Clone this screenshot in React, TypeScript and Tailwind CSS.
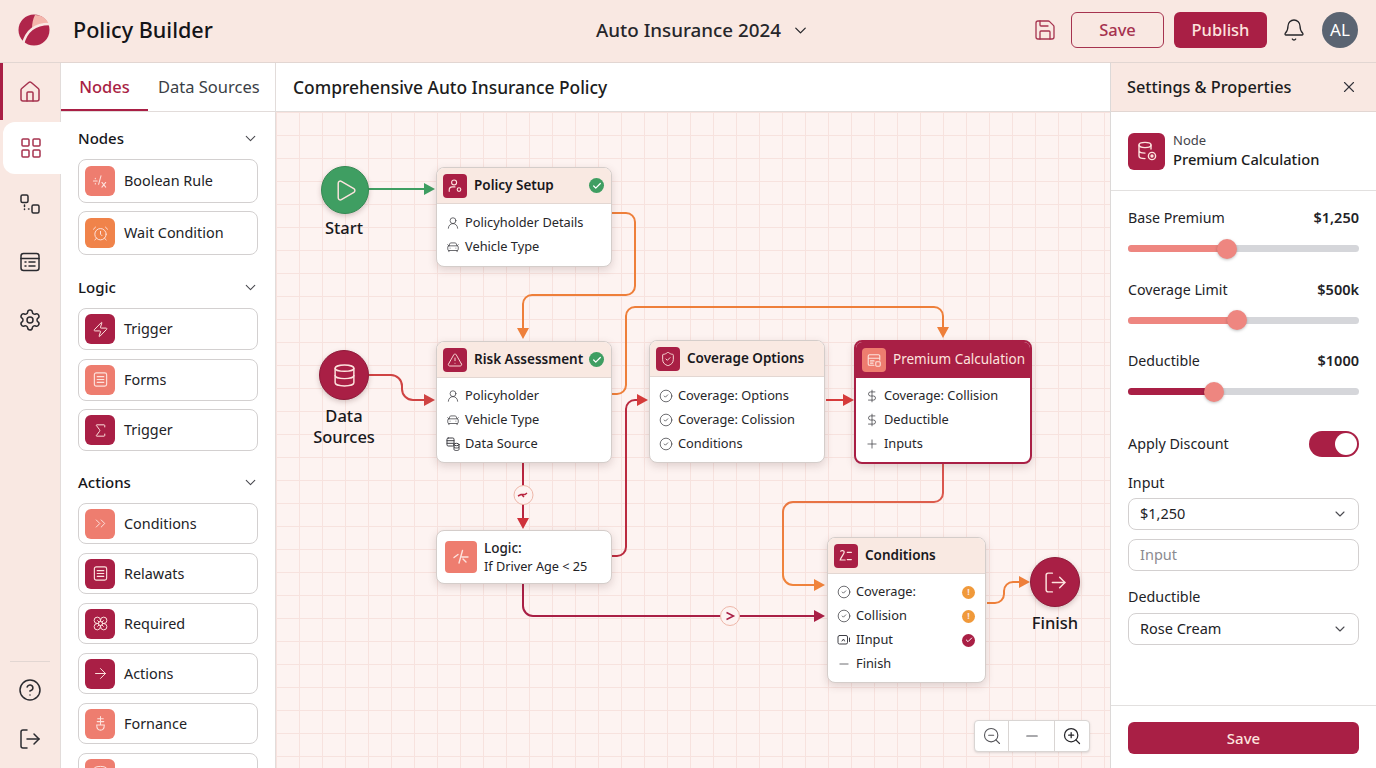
import React from "react";
import {
  House, LayoutGrid, Settings, CircleHelp, LogOut, Save, Bell, ChevronDown, X, AlarmClock, Zap,
  Sigma, ChevronsRight, Flower, ArrowRight, Play, Database, UserRound, CarFront,
  TriangleAlert, ShieldCheck, CircleCheck, Check, DollarSign, Plus, Minus, ZoomIn, ZoomOut,
} from "lucide-react";

type IconT = React.ComponentType<{ size?: number; strokeWidth?: number; className?: string }>;

const FnIcon: IconT = ({ size = 18, className }) => (
  <svg width={size} height={size} viewBox="0 0 18 18" fill="none" stroke="currentColor" strokeWidth={1.1} strokeLinecap="round" className={className}>
    <path d="M1.5 8.5h4M3.5 5.5v.6M3.5 11v.6M9.5 3 7 12M10.5 10l4 5M14.5 10l-4 5" />
  </svg>
);
const LogicIcon: IconT = ({ size = 18, className }) => (
  <svg width={size} height={size} viewBox="0 0 18 18" fill="none" stroke="currentColor" strokeWidth={1.4} strokeLinecap="round" className={className}>
    <path d="M2 9.5 6 6.5M10.5 2.5 7 15M10 9h6M11 11l3 3" />
  </svg>
);
const CondIcon: IconT = ({ size = 18, className }) => (
  <svg width={size} height={size} viewBox="0 0 18 18" fill="none" stroke="currentColor" strokeWidth={1.4} strokeLinecap="round" className={className}>
    <path d="M3 3.5c1-1 4-1 4 1 0 2-4 6-4.500 9H8M10.5 5H15M10.5 13H15" />
  </svg>
);
const PotIcon: IconT = ({ size = 18, className }) => (
  <svg width={size} height={size} viewBox="0 0 18 18" fill="none" stroke="currentColor" strokeWidth={1.1} strokeLinecap="round" className={className}>
    <path d="M9 1.500v9M6 4h6M5.500 7h7M5 10.500h8c0 3-1.500 5.500-4 5.500s-4-2.500-4-5.500Z" />
  </svg>
);
const DocLines: IconT = ({ size = 18, className }) => (
  <svg width={size} height={size} viewBox="0 0 18 18" fill="none" stroke="currentColor" strokeWidth={1.2} strokeLinecap="round" className={className}>
    <rect x="2.500" y="2" width="13" height="14" rx="2" />
    <path d="M5.500 6h7M5.500 9h7M5.500 12h7" />
  </svg>
);
const UserKey: IconT = ({ size = 18, className }) => (
  <svg width={size} height={size} viewBox="0 0 18 18" fill="none" stroke="currentColor" strokeWidth={1.3} strokeLinecap="round" className={className}>
    <circle cx="8" cy="5" r="2.800" />
    <path d="M2.500 15v-1.500c0-2 1.500-3.500 3.500-3.500h3" />
    <circle cx="13.500" cy="13" r="2" />
  </svg>
);
const CalcIcon: IconT = ({ size = 18, className }) => (
  <svg width={size} height={size} viewBox="0 0 18 18" fill="none" stroke="currentColor" strokeWidth={1.2} strokeLinecap="round" className={className}>
    <path d="M9 15H4a1.500 1.500 0 0 1-1.500-1.500v-9A1.500 1.500 0 0 1 4 3h10a1.500 1.500 0 0 1 1.500 1.500V9M2.500 7h13M5 10h4M5 12.500h3" />
    <rect x="11" y="11" width="5" height="5" rx="1" />
  </svg>
);
const DbGear: IconT = ({ size = 22, className }) => (
  <svg width={size} height={size} viewBox="0 0 22 22" fill="none" stroke="currentColor" strokeWidth={1.4} strokeLinecap="round" className={className}>
    <ellipse cx="9" cy="5" rx="6" ry="2.600" />
    <path d="M3 5v11c0 1.500 2.500 2.600 6 2.600M15 5v4M3 10.500c0 1.500 2.500 2.600 6 2.600" />
    <circle cx="16" cy="16" r="3.600" />
    <circle cx="16" cy="16" r="1" fill="currentColor" />
  </svg>
);
const FlowRail: IconT = ({ size = 22, className }) => (
  <svg width={size} height={size} viewBox="0 0 22 22" fill="none" stroke="currentColor" strokeWidth={1.5} strokeLinecap="round" strokeLinejoin="round" className={className}>
    <rect x="2" y="2" width="7" height="7.500" rx="1.500" />
    <rect x="13" y="12" width="7" height="8" rx="1.500" />
    <path d="M5.500 12v1.500M5.500 16v.5M9.500 16h.5" />
  </svg>
);
const TableRail: IconT = ({ size = 22, className }) => (
  <svg width={size} height={size} viewBox="0 0 22 22" fill="none" stroke="currentColor" strokeWidth={1.5} strokeLinecap="round" strokeLinejoin="round" className={className}>
    <rect x="2" y="2.500" width="18" height="17" rx="2.500" />
    <path d="M2 7.500h18M6 11h1M10 11h6M6 15h1M10 15h6" />
  </svg>
);
const VideoBox: IconT = ({ size = 14, className }) => (
  <svg width={size} height={size} viewBox="0 0 14 14" fill="none" stroke="currentColor" strokeWidth={1} strokeLinecap="round" className={className}>
    <rect x="1" y="2.500" width="9.500" height="8.500" rx="1.500" />
    <path d="M5 8l1.500-2 1 2M12.500 5v3.500" />
  </svg>
);
const DbStack: IconT = ({ size = 14, className }) => (
  <svg width={size} height={size} viewBox="0 0 14 14" fill="none" stroke="currentColor" strokeWidth={1} strokeLinecap="round" className={className}>
    <rect x="1" y="1" width="7" height="8" rx="1.200" />
    <path d="M1 3.700h7M1 6.300h7" />
    <ellipse cx="10.500" cy="7.500" rx="2.500" ry="1.200" />
    <path d="M8 7.500v5c0 .6 1.100 1 2.500 1s2.500-.4 2.500-1v-5M8 10c0 .6 1.100 1 2.500 1s2.500-.4 2.500-1" />
  </svg>
);

const SideItem = ({ icon: Icon, label, tone, h }: { icon: IconT; label: string; tone: string; h: string }) => (
  <div className={`flex ${h} shrink-0 items-center gap-[9px] rounded-lg border border-[#d3d0d0] bg-white pl-[6px]`}>
    <div className={`flex h-[30px] w-[30px] items-center justify-center rounded-md text-[#fde3de] ${tone}`}>
      <Icon size={17} strokeWidth={1.4} />
    </div>
    <span className="text-[14.4px] text-[#222226]">{label}</span>
  </div>
);

const crimson = "bg-[#a91f45]";
const coral = "bg-[#ee7d6f]";

const SectionHead = ({ title }: { title: string }) => (
  <div className="flex h-5 items-center justify-between">
    <span className="text-[15px] font-medium text-[#16161a]">{title}</span>
    <ChevronDown size={17} strokeWidth={1.5} className="mr-[-1px] text-[#4a4a50]" />
  </div>
);

const RailBtn = ({ icon: Icon, cls, size = 24 }: { icon: IconT; cls?: string; size?: number }) => (
  <div className={`flex items-center justify-center ${cls ?? ""}`}>
    <Icon size={size} strokeWidth={1.5} />
  </div>
);

type Row = { icon: IconT; text: string; badge?: "warn" | "ok" };

const Good = () => (
  <span className="flex h-[15px] w-[15px] items-center justify-center rounded-full bg-[#3f9e62] text-white">
    <Check size={10} strokeWidth={3} />
  </span>
);

const NodeCard = ({
  x, y, w, h, title, icon: Icon, rows, ok, active, pt = "pt-[7px]",
}: {
  x: string; y: string; w: string; h: string; title: string; icon: IconT; rows: Row[]; ok?: boolean; active?: boolean; pt?: string;
}) => (
  <div className={`absolute ${x} ${y} ${w} ${h} overflow-hidden rounded-lg border bg-white shadow-[0_3px_8px_rgba(90,50,50,0.18)] ${active ? "border-2 border-[#a91f45]" : "border-[#d4cdca]"}`}>
    <div className={`flex h-[36px] items-center border-b pl-[6px] pr-[7px] ${active ? "border-[#a91f45] bg-[#a91f45] text-[#fde3de]" : "border-[#e3d7d2] bg-[#f9e9e2] text-[#18181c]"}`}>
      <div className={`mr-[7px] flex h-[24px] w-[24px] shrink-0 items-center justify-center rounded ${active ? "bg-[#ee7d6f]" : "bg-[#a91f45]"} text-[#fde3de]`}>
        <Icon size={16} strokeWidth={1.4} />
      </div>
      <span className={`flex-1 whitespace-nowrap pb-[1px] text-[13.5px] ${active ? "font-normal" : "font-semibold"}`}>{title}</span>
      {ok && <Good />}
    </div>
    <div className={`flex flex-col ${pt} pl-[9px] pr-[10px]`}>
      {rows.map((r, i) => (
        <div key={i} className="flex h-[24px] items-center text-[12.8px] text-[#26262a]">
          <span className="flex w-[19px] shrink-0 justify-start text-[#3f3f45]">
            <r.icon size={14} strokeWidth={1.3} />
          </span>
          <span className="flex-1 whitespace-nowrap">{r.text}</span>
          {r.badge === "warn" && (
            <span className="flex h-[13px] w-[13px] items-center justify-center rounded-full bg-[#f0993a] text-[9px] font-bold text-[#fde3de]">!</span>
          )}
          {r.badge === "ok" && (
            <span className="flex h-[13px] w-[13px] items-center justify-center rounded-full bg-[#a91f45] text-white">
              <Check size={8} strokeWidth={3} />
            </span>
          )}
        </div>
      ))}
    </div>
  </div>
);

const SliderRow = ({ label, value, pos, fill }: { label: string; value: string; pos: string; fill: string }) => (
  <div className="h-[71.5px]">
    <div className="flex h-5 items-center justify-between text-[14.2px] text-[#222226]">
      <span>{label}</span>
      <span className="text-[14.5px] font-semibold">{value}</span>
    </div>
    <div className="relative mt-[17px] h-[7px] rounded-full bg-[#d5d6da]">
      <div className={`h-full rounded-full ${fill} ${pos}`} />
      <div className={`absolute top-[-6.5px] h-[20px] w-[20px] rounded-full bg-[#ee8680] shadow-[0_1px_3px_rgba(0,0,0,0.25)] ${pos === "w-[99px]" ? "left-[89px]" : pos === "w-[109px]" ? "left-[99px]" : "left-[76px]"}`} />
    </div>
  </div>
);

const SelectBox = ({ text, cls }: { text: string; cls: string }) => (
  <div className={`flex h-[32px] items-center justify-between rounded-lg border border-[#d3d0d0] pl-[11px] pr-[10px] text-[14.5px] text-[#222226] ${cls}`}>
    <span>{text}</span>
    <ChevronDown size={16} strokeWidth={1.6} className="text-[#4a4a50]" />
  </div>
);

const Head = ({ x, y, fill, dir = "right" }: { x: number; y: number; fill: string; dir?: "right" | "down" }) =>
  dir === "right" ? (
    <path d={`M${x} ${y}l-11 -6v12z`} fill={fill} />
  ) : (
    <path d={`M${x} ${y}l-6 -11h12z`} fill={fill} />
  );

const Edges = () => (
  <svg className="absolute left-0 top-0" width={834} height={656} viewBox="276 112 834 656" fill="none">
    <defs>
      <linearGradient id="pc" gradientUnits="userSpaceOnUse" x1="943" y1="470" x2="800" y2="590">
        <stop offset="0" stopColor="#d9544f" />
        <stop offset="1" stopColor="#f0843c" />
      </linearGradient>
    </defs>
    <g strokeWidth={2}>
      <path d="M368 189H426" stroke="#3f9e62" />
      <Head x={435} y={189} fill="#3f9e62" />
      <path d="M612 213h14a9 9 0 0 1 9 9v64a9 9 0 0 1-9 9H532a9 9 0 0 0-9 9v26" stroke="#ee7f3a" />
      <Head x={523} y={339} fill="#ee7f3a" dir="down" />
      <path d="M369 375h22a11 11 0 0 1 11 11v3a11 11 0 0 0 11 11h14" stroke="#cf4343" />
      <Head x={435} y={400} fill="#cf4343" />
      <path d="M612 394h5a9 9 0 0 0 9-9v-69a9 9 0 0 1 9-9h299a9 9 0 0 1 9 9v14" stroke="#ee7f3a" />
      <Head x={943} y={338} fill="#ee7f3a" dir="down" />
      <path d="M612 556h5a9 9 0 0 0 9-9V409a9 9 0 0 1 9-9h6" stroke="#bb2b3f" />
      <Head x={648} y={400} fill="#d63b3b" />
      <path d="M826 400h18" stroke="#d63b3b" />
      <Head x={854} y={400} fill="#d63b3b" />
      <path d="M523 463v57" stroke="#b8243f" />
      <Head x={523} y={529} fill="#cf3039" dir="down" />
      <path d="M523 584v22a10 10 0 0 0 10 10h284" stroke="#a91f45" />
      <Head x={825} y={616} fill="#a91f45" />
      <path d="M943 464v29a9 9 0 0 1-9 9H793a10 10 0 0 0-10 10v63a10 10 0 0 0 10 10h24" stroke="url(#pc)" />
      <Head x={825} y={585} fill="#f0843c" />
      <path d="M987 603h8a9 9 0 0 0 9-9v-3a9 9 0 0 1 9-9h8" stroke="#ee7f3a" />
      <Head x={1030} y={582} fill="#ee7f3a" />
    </g>
    <circle cx="523.500" cy="495" r="9.500" fill="#fdf3f1" stroke="#eeb7a9" />
    <path d="M518 496l3-1.500h4l2-1.500M522 495l2 2" stroke="#b8243f" strokeWidth={1.5} />
    <circle cx="730" cy="616" r="9.500" fill="#fdf3f1" stroke="#eeb7a9" />
    <path d="M726.500 612.500l7 3.500-7 3.500" stroke="#a91f45" strokeWidth={1.5} />
  </svg>
);

const Circle = ({ x, y, size, bg, icon: Icon, label, labelCls }: { x: string; y: string; size: string; bg: string; icon: IconT; label: string; labelCls: string }) => (
  <>
    <div className={`absolute ${x} ${y} ${size} flex items-center justify-center rounded-full border ${bg} text-[#fde3de] shadow-[0_2px_5px_rgba(90,50,50,0.25)]`}>
      <Icon size={25} strokeWidth={1.4} />
    </div>
    <div className={`absolute text-center text-[16.5px] font-medium leading-[21px] text-[#18181c] ${labelCls}`}>{label}</div>
  </>
);

export default function App() {
  return (
    <div className="flex h-[768px] w-[1376px] flex-col overflow-hidden bg-white font-['Noto_Sans',sans-serif] text-[#222226]">
      {/* top bar */}
      <header className="grid h-[63px] shrink-0 grid-cols-[596px_auto_1fr] items-center border-b border-[#e2d6d2] bg-[#f9e8e2]">
        <div className="flex items-center pb-[2px] pl-[18px]">
          <svg width="32" height="32" viewBox="0 0 32 32">
            <circle cx="16" cy="16" r="15.500" fill="#b0254b" />
            <path d="M17 1c6 0 11 3 14 9-6-1-12 0-17 5 0-6 1-10 3-14Z" fill="#f4b6ac" />
            <path d="M5 30C8 18 16 10 31 10" stroke="#f9e8e3" strokeWidth="2.400" fill="none" />
          </svg>
          <span className="ml-[23px] text-[21.6px] font-medium text-[#141418]">Policy Builder</span>
        </div>
        <div className="flex items-center gap-[10px] pb-[2px] text-[18.8px] font-medium text-[#26262a]">
          <span>Auto Insurance 2024</span>
          <ChevronDown size={19} strokeWidth={1.6} />
        </div>
        <div className="flex items-center justify-end pb-[2px] pr-[18px]">
          <Save size={24} strokeWidth={1.3} className="mr-[14px] text-[#a6334f]" />
          <div className="mr-[10px] flex h-[36px] w-[93px] items-center justify-center rounded-md border border-[#a6334f] text-[16.5px] font-medium text-[#a6334f]">Save</div>
          <div className="mr-[15px] flex h-[36px] w-[93px] items-center justify-center rounded-md bg-[#a91f45] text-[16.5px] font-medium text-[#fde3de]">Publish</div>
          <Bell size={24} strokeWidth={1.3} className="mr-[16px] text-[#26262a]" />
          <div className="flex h-[36px] w-[36px] items-center justify-center rounded-full bg-[#5b6472] text-[17px] text-white">AL</div>
        </div>
      </header>

      <div className="flex min-h-0 flex-1">
        {/* rail */}
        <nav className="relative flex w-[61px] shrink-0 flex-col items-stretch border-r border-[#e2dcda] bg-[#f9e8e2]">
          <div className="h-[57px] border-l-[3px] border-[#a91f45]">
            <RailBtn icon={House} cls="h-full text-[#a6334f] pr-[4px]" />
          </div>
          <div className="ml-[3px] mr-[-1px] mt-[2px] flex h-[52px] items-center justify-center rounded-l-xl bg-white pr-[3px] text-[#a6334f]">
            <LayoutGrid size={24} strokeWidth={1.5} />
          </div>
          <RailBtn icon={FlowRail} size={22} cls="mt-[18px] h-[24px] text-[#2b2b30]" />
          <RailBtn icon={TableRail} size={22} cls="mt-[34px] h-[24px] text-[#2b2b30]" />
          <RailBtn icon={Settings} cls="mt-[34px] h-[24px] text-[#2b2b30]" />
          <div className="mx-[10px] mt-auto h-px bg-[#e2d6d2]" />
          <RailBtn icon={CircleHelp} cls="mt-[16px] h-[24px] text-[#2b2b30]" />
          <RailBtn icon={LogOut} cls="mb-[17px] mt-[25px] h-[24px] text-[#2b2b30]" />
        </nav>

        {/* node library */}
        <aside className="flex w-[215px] shrink-0 flex-col overflow-hidden border-r border-[#e2dcda] bg-white">
          <div className="flex h-[49px] shrink-0 items-stretch border-b border-[#e2dcda] text-[16.5px]">
            <div className="flex w-[87px] items-center justify-center border-b-2 border-[#a91f45] pt-[2px] font-medium text-[#a91f45]">Nodes</div>
            <div className="ml-[10px] flex items-center pt-[1px] text-[#3b3f46]">Data Sources</div>
          </div>
          <div className="flex flex-col px-[17px] pt-[16px]">
            <SectionHead title="Nodes" />
            <div className="mt-[11px] flex flex-col gap-[8px]">
              <SideItem icon={FnIcon} label="Boolean Rule" tone={coral} h="h-[44px]" />
              <SideItem icon={AlarmClock} label="Wait Condition" tone="bg-[#f0834a]" h="h-[44px]" />
            </div>
            <div className="mt-[22px]"><SectionHead title="Logic" /></div>
            <div className="mt-[11px] flex flex-col gap-[8.5px]">
              <SideItem icon={Zap} label="Trigger" tone={crimson} h="h-[42px]" />
              <SideItem icon={DocLines} label="Forms" tone={coral} h="h-[42px]" />
              <SideItem icon={Sigma} label="Trigger" tone={crimson} h="h-[42px]" />
            </div>
            <div className="mt-[21px]"><SectionHead title="Actions" /></div>
            <div className="mt-[11px] flex flex-col gap-[9px]">
              <SideItem icon={ChevronsRight} label="Conditions" tone={coral} h="h-[41px]" />
              <SideItem icon={DocLines} label="Relawats" tone={crimson} h="h-[41px]" />
              <SideItem icon={Flower} label="Required" tone={crimson} h="h-[41px]" />
              <SideItem icon={ArrowRight} label="Actions" tone={crimson} h="h-[41px]" />
              <SideItem icon={PotIcon} label="Fornance" tone={coral} h="h-[41px]" />
              <SideItem icon={Database} label="Submitter" tone={coral} h="h-[41px]" />
            </div>
          </div>
        </aside>

        {/* canvas column */}
        <main className="flex min-w-0 flex-1 flex-col">
          <div className="flex h-[49px] shrink-0 items-center border-b border-[#e2dcda] bg-white pl-[17px] text-[17.4px] font-medium text-[#1c1c20]">
            Comprehensive Auto Insurance Policy
          </div>
          <div className="relative flex-1 overflow-hidden bg-[#fdf3f1] bg-[linear-gradient(#f7e2de_1px,transparent_1px),linear-gradient(90deg,#f7e2de_1px,transparent_1px)] bg-[size:23px_23px]">
            <Edges />
            <Circle x="left-[45px]" y="top-[54px]" size="h-[48px] w-[48px]" bg="bg-[#3f9e62] border-[#358a54]" icon={Play} label="Start" labelCls="left-[33px] top-[105px] w-[70px]" />
            <Circle x="left-[43px]" y="top-[238px]" size="h-[50px] w-[50px]" bg="bg-[#a91f45] border-[#8f1a3a]" icon={Database} label={"Data Sources"} labelCls="left-[33px] top-[293px] w-[70px]" />
            <Circle x="left-[754px]" y="top-[445px]" size="h-[50px] w-[50px]" bg="bg-[#a91f45] border-[#8f1a3a]" icon={LogOut} label="Finish" labelCls="left-[744px] top-[500px] w-[70px]" />

            <NodeCard x="left-[160px]" y="top-[55px]" w="w-[176px]" h="h-[100px]" title="Policy Setup" icon={UserKey} ok
              rows={[{ icon: UserRound, text: "Policyholder Details" }, { icon: CarFront, text: "Vehicle Type" }]} />
            <NodeCard x="left-[160px]" y="top-[229px]" w="w-[176px]" h="h-[122px]" title="Risk Assessment" icon={TriangleAlert} ok pt="pt-[6px]"
              rows={[{ icon: UserRound, text: "Policyholder" }, { icon: CarFront, text: "Vehicle Type" }, { icon: DbStack, text: "Data Source" }]} />
            <NodeCard x="left-[373px]" y="top-[228px]" w="w-[176px]" h="h-[123px]" title="Coverage Options" icon={ShieldCheck}
              rows={[{ icon: CircleCheck, text: "Coverage: Options" }, { icon: CircleCheck, text: "Coverage: Colission" }, { icon: CircleCheck, text: "Conditions" }]} />
            <NodeCard x="left-[578px]" y="top-[228px]" w="w-[178px]" h="h-[124px]" title="Premium Calculation" icon={CalcIcon} active pt="pt-[6px]"
              rows={[{ icon: DollarSign, text: "Coverage: Collision" }, { icon: DollarSign, text: "Deductible" }, { icon: Plus, text: "Inputs" }]} />
            <NodeCard x="left-[551px]" y="top-[425px]" w="w-[159px]" h="h-[146px]" title="Conditions" icon={CondIcon} pt="pt-[6px]"
              rows={[
                { icon: CircleCheck, text: "Coverage:", badge: "warn" },
                { icon: CircleCheck, text: "Collision", badge: "warn" },
                { icon: VideoBox, text: "IInput", badge: "ok" },
                { icon: Minus, text: "Finish" },
              ]} />

            <div className="absolute left-[160px] top-[418px] flex h-[54px] w-[176px] items-center rounded-lg border border-[#d4cdca] bg-white pl-[8px] shadow-[0_3px_8px_rgba(90,50,50,0.18)]">
              <div className="flex h-[32px] w-[32px] items-center justify-center rounded bg-[#ee7d6f] text-[#fde3de]">
                <LogicIcon size={18} />
              </div>
              <div className="ml-[7px] text-[12.7px] leading-[18px] text-[#222226]">
                <div className="text-[13.5px] font-medium">Logic:</div>
                <div>If Driver Age &lt; 25</div>
              </div>
            </div>

            <div className="absolute left-[698px] top-[608px] flex h-[32px] w-[116px] items-stretch rounded border border-[#d9d5d3] bg-white text-[#55555a] shadow-sm">
              <div className="flex w-[34px] items-center justify-center border-r border-[#d9d5d3]"><ZoomOut size={20} strokeWidth={1.3} /></div>
              <div className="flex w-[46px] items-center justify-center border-r border-[#d9d5d3]"><Minus size={18} strokeWidth={1.5} /></div>
              <div className="flex flex-1 items-center justify-center text-[#26262a]"><ZoomIn size={20} strokeWidth={1.5} /></div>
            </div>
          </div>
        </main>

        {/* properties */}
        <aside className="flex w-[266px] shrink-0 flex-col border-l border-[#dcd9d8] bg-white">
          <div className="flex h-[49px] shrink-0 items-center justify-between border-b border-[#e2d6d2] bg-[#f9e8e2] pl-[16px] pr-[18px]">
            <span className="text-[16.3px] font-medium text-[#1c1c20]">Settings &amp; Properties</span>
            <X size={18} strokeWidth={1.5} className="text-[#33333a]" />
          </div>
          <div className="flex h-[79px] shrink-0 items-center border-b border-[#e2e0df] pl-[17px]">
            <div className="flex h-[37px] w-[37px] items-center justify-center rounded-md bg-[#a91f45] text-[#fde3de]">
              <DbGear size={22} />
            </div>
            <div className="ml-[8px] pb-[2px] leading-[19px]">
              <div className="text-[13px] text-[#44444a]">Node</div>
              <div className="text-[14.7px] font-medium text-[#1c1c20]">Premium Calculation</div>
            </div>
          </div>
          <div className="flex flex-1 flex-col px-[17px] pt-[17px]">
            <SliderRow label="Base Premium" value="$1,250" pos="w-[99px]" fill="bg-[#ee8680]" />
            <SliderRow label="Coverage Limit" value="$500k" pos="w-[109px]" fill="bg-[#ee8680]" />
            <SliderRow label="Deductible" value="$1000" pos="w-[86px]" fill="bg-[#a91f45]" />
            <div className="mt-[8px] flex h-[26px] items-center justify-between text-[14.3px]">
              <span>Apply Discount</span>
              <div className="flex h-[26px] w-[50px] items-center justify-end rounded-full bg-[#a91f45] pr-[2px]">
                <div className="h-[22px] w-[22px] rounded-full bg-white" />
              </div>
            </div>
            <div className="mt-[16px] flex h-5 items-center text-[14.3px]">Input</div>
            <SelectBox text="$1,250" cls="mt-[5px]" />
            <div className="mt-[9px] flex h-[32px] items-center rounded-lg border border-[#d3d0d0] pl-[11px] text-[14.5px] text-[#8b8b90]">Input</div>
            <div className="mt-[16px] flex h-5 items-center text-[14.3px]">Deductible</div>
            <SelectBox text="Rose Cream" cls="mt-[6px]" />
          </div>
          <div className="h-[63px] shrink-0 border-t border-[#e2e0df] px-[17px] pt-[16px]">
            <div className="flex h-[32px] items-center justify-center rounded-md bg-[#a91f45] text-[15px] font-medium text-[#fde3de]">Save</div>
          </div>
        </aside>
      </div>
    </div>
  );
}
